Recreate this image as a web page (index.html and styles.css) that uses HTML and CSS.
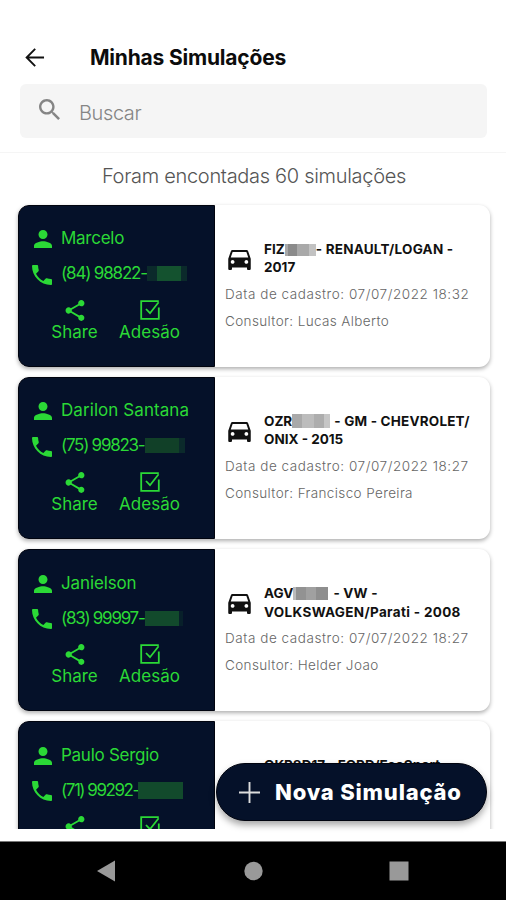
FILE: index.html
```html
<!DOCTYPE html>
<html lang="pt-BR">
  <head>
    <meta charset="utf-8">
    <title>Minhas Simulações</title>
    <link rel="stylesheet" href="styles.css">
  </head>
  <body>
    <svg class="sprite">
      <symbol id="person" viewBox="4 4 16 16"><path d="M12 12c2.21 0 4-1.79 4-4s-1.79-4-4-4-4 1.79-4 4 1.790 4 4 4zm0 2c-2.670 0-8 1.340-8 4v2h16v-2c0-2.660-5.330-4-8-4z"/></symbol>
      <symbol id="phone" viewBox="3 3 18 18"><path d="M6.620 10.790c1.440 2.830 3.760 5.140 6.590 6.590l2.200-2.200c.27-.27.67-.36 1.020-.24 1.120.37 2.330.57 3.570.57.55 0 1 .45 1 1V20c0 .55-.45 1-1 1-9.390 0-17-7.610-17-17 0-.55.45-1 1-1h3.500c.55 0 1 .45 1 1 0 1.250.2 2.450.57 3.570.11.35.03.74-.25 1.020l-2.200 2.200z"/></symbol>
      <symbol id="share" viewBox="3 2 18 20"><path d="M18 16.080c-.76 0-1.440.3-1.960.77L8.910 12.700c.05-.23.09-.46.09-.7s-.04-.47-.09-.7l7.050-4.110c.54.5 1.250.81 2.040.81 1.660 0 3-1.340 3-3s-1.340-3-3-3-3 1.340-3 3c0 .24.04.47.09.7L8.040 9.810C7.500 9.310 6.790 9 6 9c-1.660 0-3 1.340-3 3s1.340 3 3 3c.79 0 1.500-.31 2.040-.81l7.120 4.160c-.05.21-.08.43-.08.650 0 1.610 1.310 2.920 2.920 2.920s2.920-1.310 2.920-2.920-1.310-2.920-2.920-2.920z"/></symbol>
      <symbol id="check" viewBox="0 0 20 20"><path d="M18.800 1.200H1.200v17.600h17.600V7.500" fill="none" stroke="currentColor" stroke-width="1.800"/><path d="M6 9l4 4.200L18.600 2.300" fill="none" stroke="currentColor" stroke-width="1.800"/></symbol>
      <symbol id="car" viewBox="3 5 18 16"><path d="M18.920 6.010C18.720 5.420 18.160 5 17.500 5h-11c-.66 0-1.210.42-1.420 1.010L3 12v8c0 .55.45 1 1 1h1c.55 0 1-.45 1-1v-1h12v1c0 .55.45 1 1 1h1c.55 0 1-.45 1-1v-8l-2.080-5.990zM6.500 16c-.83 0-1.500-.67-1.500-1.500S5.670 13 6.500 13s1.500.67 1.500 1.500S7.330 16 6.500 16zm11 0c-.83 0-1.500-.67-1.500-1.500s.67-1.500 1.500-1.500 1.500.67 1.500 1.500-.67 1.500-1.500 1.500zM5 11l1.500-4.500h11L19 11H5z"/></symbol>
    </svg>

    <header class="header">
      <div class="title-row">
        <svg class="back" viewBox="0 0 20 20"><path d="M19.500 10H1.500M10.200 1L1.200 10l9 9"/></svg>
        <h1>Minhas Simulações</h1>
      </div>
      <div class="search">
        <svg viewBox="3 3 17.500 17.500"><path d="M15.500 14h-.79l-.28-.27C15.410 12.590 16 11.110 16 9.500 16 5.910 13.090 3 9.500 3S3 5.910 3 9.500 5.910 16 9.500 16c1.610 0 3.090-.59 4.230-1.570l.27.28v.79l5 4.990L20.490 19l-4.990-5zm-6 0C7.010 14 5 11.990 5 9.500S7.010 5 9.500 5 14 7.010 14 9.500 11.990 14 9.500 14z"/></svg>
        <span>Buscar</span>
      </div>
    </header>

    <main class="list">
      <p class="count"><span>Foram encontadas 60 simulações</span></p>

      <article class="card">
        <div class="client">
          <div class="line"><svg class="i-person"><use href="#person"/></svg><span class="n1">Marcelo</span></div>
          <div class="line phone"><svg class="i-phone"><use href="#phone"/></svg><span class="p1">(84) 98822-</span><i class="mask mask-a"></i></div>
          <div class="actions">
            <div class="action"><svg class="i-share"><use href="#share"/></svg><span>Share</span></div>
            <div class="action"><svg class="i-check"><use href="#check"/></svg><span>Adesão</span></div>
          </div>
        </div>
        <div class="info">
          <div class="vehicle"><svg class="i-car"><use href="#car"/></svg><h2>FIZ<i class="plate plate-a"></i><span class="v1">- RENAULT/LOGAN -</span><br>2017</h2></div>
          <p class="date">Data de cadastro: 07/07/2022 18:32</p>
          <p class="owner">Consultor: Lucas Alberto</p>
        </div>
      </article>

      <article class="card">
        <div class="client">
          <div class="line"><svg class="i-person"><use href="#person"/></svg><span class="n2">Darilon Santana</span></div>
          <div class="line phone"><svg class="i-phone"><use href="#phone"/></svg><span class="p2">(75) 99823-</span><i class="mask mask-b"></i></div>
          <div class="actions">
            <div class="action"><svg class="i-share"><use href="#share"/></svg><span>Share</span></div>
            <div class="action"><svg class="i-check"><use href="#check"/></svg><span>Adesão</span></div>
          </div>
        </div>
        <div class="info">
          <div class="vehicle"><svg class="i-car"><use href="#car"/></svg><h2>OZR<i class="plate plate-b"></i><span class="v2">- GM - CHEVROLET/</span><br>ONIX - 2015</h2></div>
          <p class="date">Data de cadastro: 07/07/2022 18:27</p>
          <p class="owner">Consultor: Francisco Pereira</p>
        </div>
      </article>

      <article class="card">
        <div class="client">
          <div class="line"><svg class="i-person"><use href="#person"/></svg><span class="n3">Janielson</span></div>
          <div class="line phone"><svg class="i-phone"><use href="#phone"/></svg><span class="p3">(83) 99997-</span><i class="mask mask-c"></i></div>
          <div class="actions">
            <div class="action"><svg class="i-share"><use href="#share"/></svg><span>Share</span></div>
            <div class="action"><svg class="i-check"><use href="#check"/></svg><span>Adesão</span></div>
          </div>
        </div>
        <div class="info">
          <div class="vehicle"><svg class="i-car"><use href="#car"/></svg><h2>AGV<i class="plate plate-c"></i><span class="v3">- VW -</span><br><span class="v3b">VOLKSWAGEN/Parati - 2008</span></h2></div>
          <p class="date">Data de cadastro: 07/07/2022 18:27</p>
          <p class="owner">Consultor: Helder Joao</p>
        </div>
      </article>

      <article class="card">
        <div class="client">
          <div class="line"><svg class="i-person"><use href="#person"/></svg><span class="n4">Paulo Sergio</span></div>
          <div class="line phone"><svg class="i-phone"><use href="#phone"/></svg><span class="p4">(71) 99292-</span><i class="mask mask-d"></i></div>
          <div class="actions">
            <div class="action"><svg class="i-share"><use href="#share"/></svg></div>
            <div class="action"><svg class="i-check"><use href="#check"/></svg></div>
          </div>
        </div>
        <div class="info">
          <div class="vehicle"><h2 class="last">OKP8D17 - FORD/EcoSport</h2></div>
        </div>
      </article>
    </main>

    <button class="fab">
      <svg viewBox="0 0 22 22"><path d="M11 0v22M0 11h22"/></svg>
      <span>Nova Simulação</span>
    </button>

    <nav class="navbar">
      <svg viewBox="0 0 506 58">
        <path d="M97 29L115 18.500V39.500Z"/>
        <circle cx="253.500" cy="29" r="9.200"/>
        <rect x="389.500" y="19.500" width="19" height="19"/>
      </svg>
    </nav>
  </body>
</html>
```
FILE: styles.css
```css
* {
  box-sizing: border-box;
}
body {
  margin: 0;
  width: 506px;
  height: 900px;
  display: flex;
  flex-direction: column;
  position: relative;
  overflow: hidden;
  background-color: #fff;
  font-family: Inter, "Liberation Sans", sans-serif;
}
h1, h2, p {
  margin: 0;
}
svg {
  display: block;
  flex: none;
  fill: currentColor;
}
.sprite {
  display: none;
}
.header {
  height: 153px;
  padding: 42px 19px 0 20px;
  border-bottom: 1px solid #f5f5f5;
  flex: none;
}
.title-row {
  display: flex;
  align-items: center;
  height: 30px;
  padding-left: 5px;
  color: #0c0c0c;
}
.back {
  width: 20px;
  height: 19px;
  fill: none;
  stroke: #111;
  stroke-width: 2;
}
h1 {
  margin-left: 45px;
  font-size: 21px;
  font-weight: 700;
  letter-spacing: -.2px;
  white-space: nowrap;
}
.search {
  display: flex;
  align-items: center;
  height: 54px;
  margin-top: 12px;
  padding-left: 19px;
  border-radius: 6px;
  background-color: #f5f5f5;
  color: #858585;
  font-size: 20px;
  font-weight: 300;
  letter-spacing: -.4px;
}
.search svg {
  width: 21px;
  height: 21px;
  margin-bottom: 3px;
}
.search span {
  margin: 4px 0 0 19px;
}
.list {
  height: 676px;
  overflow: hidden;
  padding: 0 16px 0 18px;
  flex: none;
}
.count {
  height: 51.600px;
  line-height: 47px;
  text-align: center;
  font-size: 20px;
  font-weight: 300;
  letter-spacing: -.3px;
  color: #555;
  white-space: nowrap;
}
.card {
  display: flex;
  width: 472px;
  height: 162px;
  margin-bottom: 10.300px;
  border-radius: 11px;
  background-color: #fff;
  box-shadow: 0 2px 4px rgba(0, 0, 0, .32);
}
.client {
  width: 197px;
  padding: 16px 0 0 15px;
  border: 1px solid #01040f;
  border-radius: 11px 0 0 11px;
  background-color: #051129;
  color: #2bd936;
  font-size: 17px;
}
.line {
  display: flex;
  align-items: center;
  height: 35px;
  white-space: nowrap;
}
.line span {
  margin-top: -2px;
}
.n1, .n4 {
  letter-spacing: -.27px;
}
.n2 {
  letter-spacing: .07px;
}
.n3 {
  letter-spacing: -.13px;
}
.p1 {
  width: 86px;
  letter-spacing: -1.170px;
}
.p2, .p3 {
  width: 84px;
  letter-spacing: -1.270px;
}
.p4 {
  width: 77px;
  letter-spacing: -1.470px;
}
.i-person {
  width: 18px;
  height: 18px;
  margin-right: 9px;
}
.i-phone {
  width: 20px;
  height: 20px;
  margin: 1px 9px 0 -2px;
}
.mask {
  width: 40px;
  height: 15px;
  margin-top: -1px;
  background: linear-gradient(90deg, #0b2a2b 0 10px, #14522f 10px 34px, #0b2a2b 34px);
}
.mask-b {
  background: linear-gradient(90deg, #114028 0 34px, #0b2a2b 34px);
}
.mask-c {
  width: 38px;
  background: linear-gradient(90deg, #124a2c 0 34px, #08202a 34px);
}
.mask-d {
  width: 45px;
  height: 17px;
  background: #124a2c;
}
.actions {
  display: flex;
  padding-left: 3px;
}
.action {
  width: 75px;
  display: flex;
  flex-direction: column;
  align-items: center;
  padding-top: 8px;
  white-space: nowrap;
}
.action span {
  margin-top: 1px;
  line-height: 21px;
}
.i-share {
  width: 20px;
  height: 21px;
}
.i-check {
  width: 20px;
  height: 20px;
  margin-bottom: 1px;
}
.info {
  flex: 1;
  padding: 36px 0 0 10px;
  color: #666;
  font-size: 13.500px;
  font-weight: 300;
  line-height: 27px;
  white-space: nowrap;
}
.date {
  letter-spacing: .550px;
}
.owner {
  letter-spacing: .380px;
}
.vehicle {
  display: flex;
  align-items: center;
  height: 37px;
  margin-bottom: 3px;
}
.i-car {
  width: 23px;
  height: 20px;
  margin: 1px 13px 0 3px;
  color: #111;
}
h2 {
  margin-top: -2px;
  font-size: 13.500px;
  font-weight: 700;
  line-height: 18.500px;
  color: #111;
}
h2.last {
  align-self: flex-start;
  margin: -1px 0 0 39px;
}
.plate {
  display: inline-block;
  width: 31px;
  height: 12px;
  vertical-align: -2px;
  background: linear-gradient(90deg, #a8a8a8 0 3px, #8b8b8b 3px 12px, #a9a9a9 12px 24px, #c2c2c2 24px);
}
.plate-b {
  width: 38px;
  height: 14px;
  background: linear-gradient(90deg, #a9a9a9 0 10px, #bcbcbc 10px 22px, #adadad 22px 32px, #c6c6c6 32px);
}
.plate-c {
  width: 35px;
  height: 13px;
  background: linear-gradient(90deg, #bbb 0 3px, #929292 3px 13px, #a0a0a0 13px 23px, #8e8e8e 23px);
}
.v1 {
  letter-spacing: .230px;
}
.v2, .v3 {
  margin-left: 4px;
  letter-spacing: .2px;
}
.v3 {
  margin-left: 5px;
}
.v3b {
  letter-spacing: .330px;
}
.fab {
  position: absolute;
  left: 216px;
  top: 763px;
  width: 271px;
  height: 58px;
  display: flex;
  align-items: center;
  padding: 0 0 0 22px;
  border: 1px solid #01040f;
  border-radius: 29px;
  background-color: #051129;
  box-shadow: 0 4px 7px rgba(0, 0, 0, .35);
  color: #fff;
  font-family: inherit;
  font-size: 22px;
  font-weight: 800;
  letter-spacing: .820px;
  white-space: nowrap;
}
.fab svg {
  width: 21px;
  height: 21px;
  margin-right: 15px;
  stroke: #ddd;
  stroke-width: 2;
}
.navbar {
  height: 59px;
  margin-top: auto;
  border-top: 1px solid #777;
  background-color: #000;
  color: #999;
}
```
